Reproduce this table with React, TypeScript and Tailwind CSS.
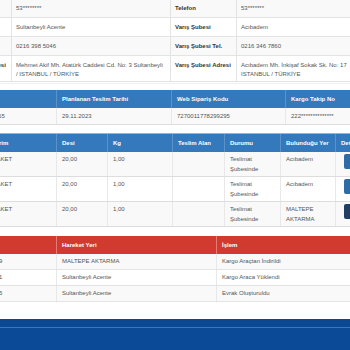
import React from "react";

const t1 = [
  ["Telefon", "53********", "Telefon", "53*******"],
  ["Çıkış Şubesi", "Sultanbeyli Acente", "Varış Şubesi", "Acıbadem"],
  ["Çıkış Şubesi Tel.", "0216 398 5046", "Varış Şubesi Tel.", "0216 346 7860"],
  [
    "Çıkış Şubesi Adresi",
    "Mehmet Akif Mh. Atatürk Caddesi Cd. No: 3 Sultanbeyli / ISTANBUL / TÜRKİYE",
    "Varış Şubesi Adresi",
    "Acıbadem Mh. İnkişaf Sokak Sk. No: 17 ISTANBUL / TÜRKİYE",
  ],
];

const t3 = [
  { n: "1", yer: "Acıbadem", dark: false },
  { n: "2", yer: "Acıbadem", dark: false },
  { n: "3", yer: "MALTEPE AKTARMA", dark: true },
];

const t4 = [
  ["29.11.2023 08:19", "MALTEPE AKTARMA", "Kargo Araçtan İndirildi"],
  ["28.11.2023 19:41", "Sultanbeyli Acente", "Kargo Araca Yüklendi"],
  ["28.11.2023 17:35", "Sultanbeyli Acente", "Evrak Oluşturuldu"],
];

export default function App() {
  return (
    <div className="relative w-[350px] h-[350px] overflow-hidden bg-white font-['Liberation_Sans',Arial,sans-serif] text-[6px] text-[#555] flex flex-col">
      {/* Table 1 */}
      <div className="ml-[-54px] w-[421px] mt-[-1px] shrink-0">
        {t1.map((r, i) => (
          <div
            key={i}
            className={`grid grid-cols-[66px_159px_66px_130px] border-b border-[#e3e3e3] ${i % 2 === 0 ? "bg-[#f9f9f9]" : "bg-white"}`}
          >
            <div className={`px-[4px] pt-[5px] ${i === 3 ? "pb-[2px]" : "pb-[4px]"} leading-[9px] font-bold text-[#333] whitespace-nowrap border-r border-[#e3e3e3]`}>{r[0]}</div>
            <div className={`px-[4px] pt-[5px] ${i === 3 ? "pb-[2px]" : "pb-[4px]"} leading-[9px] border-r border-[#e3e3e3]`}>{r[1]}</div>
            <div className={`px-[4px] pt-[5px] ${i === 3 ? "pb-[2px]" : "pb-[4px]"} leading-[9px] font-bold text-[#333] whitespace-nowrap border-r border-[#e3e3e3]`}>{r[2]}</div>
            <div className={`px-[4px] pt-[5px] ${i === 3 ? "pb-[2px]" : "pb-[4px]"} leading-[9px]`}>{r[3]}</div>
          </div>
        ))}
      </div>
      <div className="h-px bg-[#f1f1f1] mt-[1px] shrink-0" />

      {/* Table 2 */}
      <div className="ml-[-57px] w-[457px] mt-[6px] shrink-0">
        <div className="grid grid-cols-[114px_115px_114px_114px] bg-[#3479bc] text-white font-bold">
          <div className="px-[5px] pt-[5px] pb-[4px] leading-[9px] border-r border-[#5b93c9] whitespace-nowrap">Fatura No</div>
          <div className="px-[5px] pt-[5px] pb-[4px] leading-[9px] border-r border-[#5b93c9] whitespace-nowrap">Planlanan Teslim Tarihi</div>
          <div className="px-[5px] pt-[5px] pb-[4px] leading-[9px] border-r border-[#5b93c9] whitespace-nowrap">Web Sipariş Kodu</div>
          <div className="px-[5px] pt-[5px] pb-[4px] leading-[9px] whitespace-nowrap">Kargo Takip No</div>
        </div>
        <div className="grid grid-cols-[114px_115px_114px_114px] bg-[#f9f9f9] border-b border-[#dddddd]">
          <div className="px-[5px] pt-[4px] pb-[3px] leading-[9px] border-r border-[#e8e8e8] whitespace-nowrap">12345678901234565</div>
          <div className="px-[5px] pt-[4px] pb-[3px] leading-[9px] border-r border-[#e8e8e8]">29.11.2023</div>
          <div className="px-[5px] pt-[4px] pb-[3px] leading-[9px] border-r border-[#e8e8e8]">7270011778299295</div>
          <div className="px-[5px] pt-[4px] pb-[3px] leading-[9px]">222**************</div>
        </div>
      </div>

      {/* Table 3 */}
      <div className="ml-[-60px] w-[456px] mt-[8px] border-t border-[#8fb6de] shrink-0">
        <div className="grid grid-cols-[46px_71px_51px_65px_52px_56px_55px_60px] bg-[#3479bc] text-white font-bold">
          {["Sıra", "Birim", "Desi", "Kg", "Teslim Alan", "Durumu", "Bulunduğu Yer", "Detay"].map((h, i) => (
            <div key={i} className={`${i === 1 ? "pl-[7px]" : "px-[5px]"} pt-[5px] pb-[4px] leading-[9px] whitespace-nowrap ${i < 7 ? "border-r border-[#5b93c9]" : ""}`}>{h}</div>
          ))}
        </div>
        {t3.map((r, i) => (
          <div
            key={i}
            className={`grid grid-cols-[46px_71px_51px_65px_52px_56px_55px_60px] border-b border-[#dddddd] ${i % 2 === 0 ? "bg-[#f9f9f9]" : "bg-white"}`}
          >
            <div className="px-[5px] pt-[2px] pb-[2px] leading-[10px] border-r border-[#e8e8e8]">{r.n}</div>
            <div className="pl-[7px] pt-[2px] pb-[2px] leading-[10px] border-r border-[#e8e8e8]">PAKET</div>
            <div className="px-[5px] pt-[2px] pb-[2px] leading-[10px] border-r border-[#e8e8e8]">20,00</div>
            <div className="px-[5px] pt-[2px] pb-[2px] leading-[10px] border-r border-[#e8e8e8]">1,00</div>
            <div className="px-[5px] pt-[2px] pb-[2px] leading-[10px] border-r border-[#e8e8e8]"></div>
            <div className="px-[5px] pt-[2px] pb-[2px] leading-[10px] border-r border-[#e8e8e8]">Teslimat Şubesinde</div>
            <div className="px-[5px] pt-[2px] pb-[2px] leading-[10px] border-r border-[#e8e8e8]">{r.yer}</div>
            <div className="pl-[8px] pt-[2px] pb-[2px]">
              <div className={`w-[30px] h-[15px] rounded-[2px] ${r.dark ? "bg-[#213f61]" : "bg-[#2e6ca6]"}`} />
            </div>
          </div>
        ))}
      </div>

      {/* Table 4 */}
      <div className="ml-[-49px] w-[466px] mt-[9px] shrink-0">
        <div className="grid grid-cols-[106px_160px_200px] bg-[#d13a2f] text-white font-bold">
          <div className="px-[5px] pt-[5px] pb-[4px] leading-[9px] border-r border-[#e57b72] whitespace-nowrap">Tarih</div>
          <div className="px-[5px] pt-[5px] pb-[4px] leading-[9px] border-r border-[#e57b72] whitespace-nowrap">Hareket Yeri</div>
          <div className="px-[5px] pt-[5px] pb-[4px] leading-[9px] whitespace-nowrap">İşlem</div>
        </div>
        {t4.map((r, i) => (
          <div
            key={i}
            className={`grid grid-cols-[106px_160px_200px] border-b border-[#e3e3e3] ${i % 2 === 0 ? "bg-[#f9f9f9]" : "bg-white"}`}
          >
            <div className="px-[5px] pt-[3px] pb-[3px] leading-[9px] border-r border-[#e8e8e8] whitespace-nowrap">{r[0]}</div>
            <div className="px-[5px] pt-[3px] pb-[3px] leading-[9px] border-r border-[#e8e8e8] whitespace-nowrap">{r[1]}</div>
            <div className="px-[5px] pt-[3px] pb-[3px] leading-[9px] whitespace-nowrap">{r[2]}</div>
          </div>
        ))}
      </div>

      {/* Footer */}
      <div className="mt-auto h-[31px] shrink-0 bg-[#0b4a97] flex flex-col">
        <div className="h-[8px] bg-[#0a4893]" />
        <div className="h-px bg-[#3f74b8]" />
      </div>
    </div>
  );
}
